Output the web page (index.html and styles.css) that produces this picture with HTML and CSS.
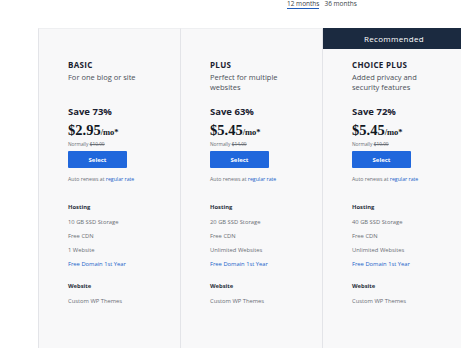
FILE: index.html
```html
<!DOCTYPE html>
<html lang="en">
<head>
    <meta charset="UTF-8">
    <title>Plans</title>
    <link rel="stylesheet" href="styles.css">
</head>
<body>
    <div class="terms">
        <span class="term active">12 months</span>
        <span class="term">36 months</span>
    </div>

    <div class="plans">
        <div class="plan">
            <div class="plan-name">BASIC</div>
            <div class="plan-desc">For one blog or site</div>
            <div class="save">Save 73%</div>
            <div class="price">$2.95<span class="per">/mo*</span></div>
            <div class="normal">Normally <s>$10.99</s></div>
            <button class="select-btn">Select</button>
            <div class="renew">Auto renews at <a href="#">regular rate</a></div>
            <div class="group-title">Hosting</div>
            <ul class="features">
                <li>10 GB SSD Storage</li>
                <li>Free CDN</li>
                <li>1 Website</li>
                <li class="link">Free Domain 1st Year</li>
            </ul>
            <div class="group-title">Website</div>
            <ul class="features">
                <li>Custom WP Themes</li>
            </ul>
        </div>

        <div class="plan">
            <div class="plan-name">PLUS</div>
            <div class="plan-desc">Perfect for multiple websites</div>
            <div class="save">Save 63%</div>
            <div class="price">$5.45<span class="per">/mo*</span></div>
            <div class="normal">Normally <s>$14.99</s></div>
            <button class="select-btn">Select</button>
            <div class="renew">Auto renews at <a href="#">regular rate</a></div>
            <div class="group-title">Hosting</div>
            <ul class="features">
                <li>20 GB SSD Storage</li>
                <li>Free CDN</li>
                <li>Unlimited Websites</li>
                <li class="link">Free Domain 1st Year</li>
            </ul>
            <div class="group-title">Website</div>
            <ul class="features">
                <li>Custom WP Themes</li>
            </ul>
        </div>

        <div class="plan recommended">
            <div class="badge">Recommended</div>
            <div class="plan-name">CHOICE PLUS</div>
            <div class="plan-desc">Added privacy and security features</div>
            <div class="save">Save 72%</div>
            <div class="price">$5.45<span class="per">/mo*</span></div>
            <div class="normal">Normally <s>$19.99</s></div>
            <button class="select-btn">Select</button>
            <div class="renew">Auto renews at <a href="#">regular rate</a></div>
            <div class="group-title">Hosting</div>
            <ul class="features">
                <li>40 GB SSD Storage</li>
                <li>Free CDN</li>
                <li>Unlimited Websites</li>
                <li class="link">Free Domain 1st Year</li>
            </ul>
            <div class="group-title">Website</div>
            <ul class="features">
                <li>Custom WP Themes</li>
            </ul>
        </div>
    </div>
</body>
</html>
```

FILE: styles.css
```css
* {
    margin: 0;
    padding: 0;
    box-sizing: border-box;
}

body {
    font-family: 'Open Sans', 'DejaVu Sans', sans-serif;
    background: #ffffff;
    color: #1d2636;
    width: 461px;
    height: 348px;
    overflow: hidden;
}

.terms {
    display: flex;
    gap: 5px;
    padding-left: 287px;
    height: 28px;
    font-size: 6.5px;
    line-height: 8px;
    color: #3a3f47;
}

.term {
    height: 9px;
}

.term.active {
    border-bottom: 1.5px solid #1e5bb8;
}

.plans {
    display: flex;
    margin-left: 38px;
    height: 320px;
}

.plan {
    position: relative;
    flex: 0 0 142px;
    background: #f8f8f9;
    border-left: 1px solid #e3e4e8;
    border-top: 1px solid #eeeff1;
    padding: 31px 0 0 29px;
}

.badge {
    position: absolute;
    top: -1px;
    left: 0;
    width: 142px;
    height: 21px;
    background: #1b2a40;
    color: #ffffff;
    font-size: 8px;
    line-height: 21px;
    text-align: center;
    letter-spacing: 0.3px;
}

.plan-name {
    font-size: 8px;
    font-weight: 700;
    letter-spacing: 0.3px;
    line-height: 10px;
    color: #1a2130;
}

.plan-desc {
    font-size: 7.5px;
    line-height: 10px;
    color: #4a4f58;
    width: 82px;
    height: 26px;
    margin-top: 2px;
}

.save {
    margin-top: 8px;
    font-size: 9.5px;
    font-weight: 700;
    line-height: 12px;
    color: #1a2130;
}

.price {
    margin-top: 4px;
    font-family: 'Liberation Serif', 'DejaVu Serif', serif;
    font-size: 14.5px;
    font-weight: 700;
    line-height: 16px;
    color: #111722;
}

.price .per {
    font-size: 8.5px;
}

.normal {
    margin-top: 1px;
    font-size: 4.8px;
    line-height: 6px;
    color: #6b6f76;
}

.select-btn {
    display: block;
    margin-top: 4px;
    width: 59px;
    height: 17px;
    border: none;
    border-radius: 1px;
    background: #2067dc;
    color: #ffffff;
    font-family: inherit;
    font-size: 6px;
    font-weight: 700;
}

.renew {
    margin-top: 8px;
    font-size: 5.2px;
    line-height: 6px;
    color: #6b6f76;
}

.renew a {
    color: #2060c8;
    text-decoration: none;
}

.group-title {
    margin-top: 21px;
    font-size: 5.8px;
    font-weight: 700;
    line-height: 8px;
    color: #2a303b;
}

.features {
    list-style: none;
    margin-top: 7px;
    display: flex;
    flex-direction: column;
    gap: 6px;
}

.features li {
    font-size: 5.8px;
    line-height: 8px;
    color: #6a6e75;
}

.features li.link {
    color: #2263c9;
}

.features + .group-title {
    margin-top: 14px;
}
```
